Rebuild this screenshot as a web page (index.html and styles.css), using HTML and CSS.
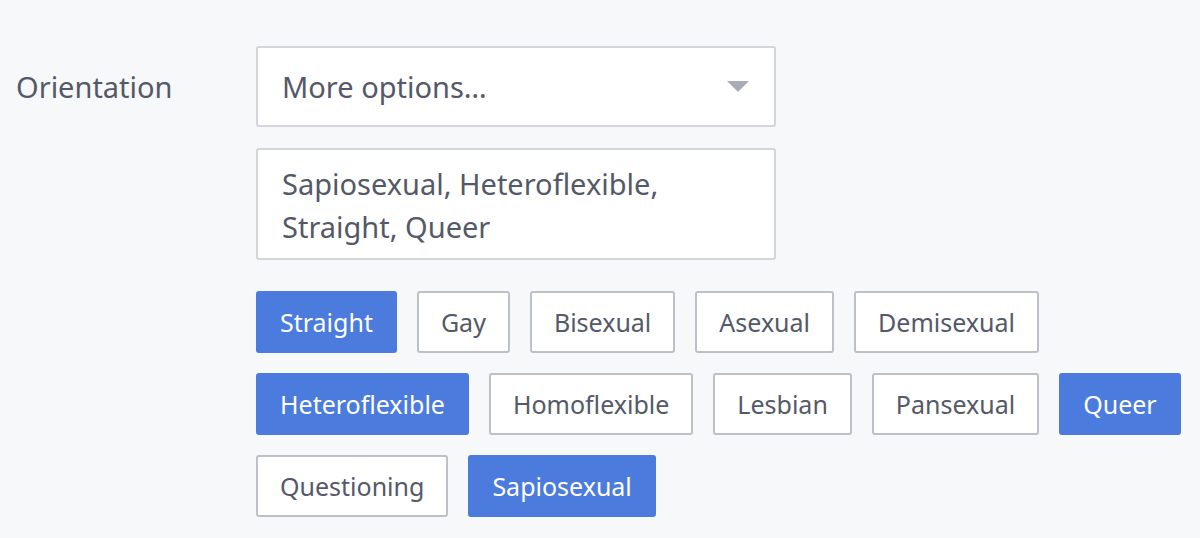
FILE: index.html
```html
<!DOCTYPE html>
<html>
<head>
<meta charset="utf-8">
<link rel="stylesheet" href="styles.css">
</head>
<body>
<div class="field">
  <div class="label">Orientation</div>
  <div class="controls">
    <div class="select">
      <span>More options…</span>
      <svg class="caret" width="22" height="11" viewBox="0 0 22 11"><path d="M0 0 H22 L11 11 Z" fill="#a9acb6"/></svg>
    </div>
    <div class="summary">Sapiosexual, Heteroflexible,<br>Straight, Queer</div>
    <div class="tags">
      <span class="tag on">Straight</span>
      <span class="tag">Gay</span>
      <span class="tag">Bisexual</span>
      <span class="tag">Asexual</span>
      <span class="tag">Demisexual</span>
      <span class="tag on">Heteroflexible</span>
      <span class="tag">Homoflexible</span>
      <span class="tag">Lesbian</span>
      <span class="tag">Pansexual</span>
      <span class="tag on">Queer</span>
      <span class="tag">Questioning</span>
      <span class="tag on">Sapiosexual</span>
    </div>
  </div>
</div>
</body>
</html>
```
FILE: styles.css
```css
html, body {
  margin: 0;
  padding: 0;
  background: #f7f8fa;
}
body {
  font-family: "Noto Sans", "Open Sans", sans-serif;
  color: #545968;
}
.field {
  display: flex;
  padding: 46px 0 0 16px;
}
.label {
  width: 240px;
  flex: none;
  font-size: 29px;
  line-height: 81px;
  height: 81px;
}
.controls {
  flex: 1;
  display: flex;
  flex-direction: column;
  gap: 21px;
}
.select {
  box-sizing: border-box;
  width: 520px;
  height: 81px;
  background: #fff;
  border: 2px solid #d3d5db;
  border-radius: 3px;
  display: flex;
  align-items: center;
  justify-content: space-between;
  padding: 0 25px 0 24px;
  font-size: 29px;
}
.caret {
  display: block;
}
.summary {
  box-sizing: border-box;
  width: 520px;
  height: 112px;
  background: #fff;
  border: 2px solid #d3d5db;
  border-radius: 3px;
  padding: 12px 24px;
  font-size: 29px;
  line-height: 43px;
}
.tags {
  display: flex;
  flex-wrap: wrap;
  gap: 20px 20px;
  margin-top: 10px;
}
.tag {
  box-sizing: border-box;
  height: 62px;
  display: flex;
  align-items: center;
  padding: 0 22px;
  border: 2px solid #bdc0c7;
  border-radius: 3px;
  background: #fff;
  font-size: 25px;
  color: #545968;
}
.tag.on {
  background: #4b7bdc;
  border-color: #4b7bdc;
  color: #fff;
}
```
